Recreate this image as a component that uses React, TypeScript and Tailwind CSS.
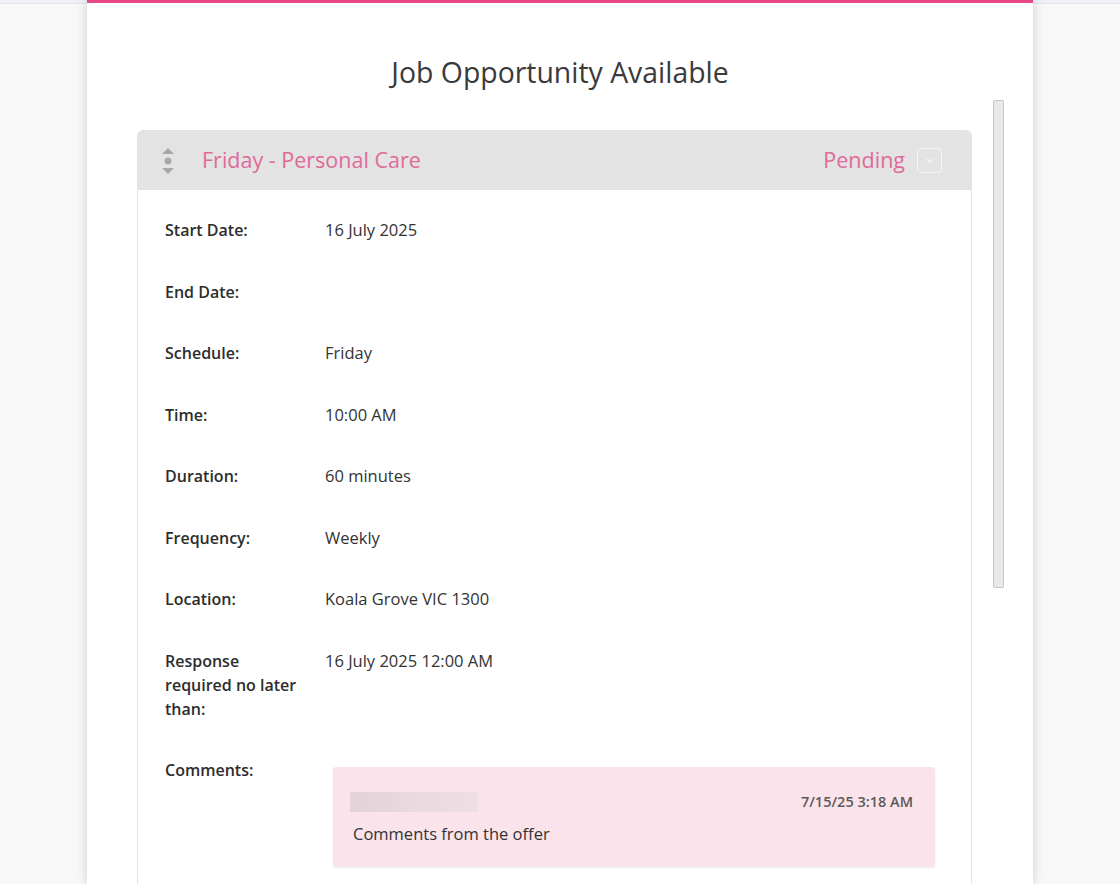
const FONT = { fontFamily: '"Open Sans", "Noto Sans", sans-serif' };

const ROWS: { label: string; value?: string }[] = [
  { label: "Start Date:", value: "16 July 2025" },
  { label: "End Date:" },
  { label: "Schedule:", value: "Friday" },
  { label: "Time:", value: "10:00 AM" },
  { label: "Duration:", value: "60 minutes" },
  { label: "Frequency:", value: "Weekly" },
  { label: "Location:", value: "Koala Grove VIC 1300" },
  { label: "Response required no later than:", value: "16 July 2025 12:00 AM" },
];

function DragHandle() {
  return (
    <svg width="14" height="30" viewBox="0 0 14 30" className="shrink-0">
      <polygon points="7,2 13,8 1,8" fill="#a8a8a8" />
      <circle cx="7" cy="15" r="3.5" fill="#a8a8a8" />
      <polygon points="1,22 13,22 7,28" fill="#a8a8a8" />
    </svg>
  );
}

function SideStrip() {
  return (
    <div className="flex flex-1 flex-col">
      <div className="h-[4px] bg-[#eef0f9] border-b border-[#e4e4e8]" />
      <div className="flex-1 bg-[#f8f8f8]" />
    </div>
  );
}

export default function App() {
  return (
    <div
      className="flex h-[884px] w-[1120px] overflow-hidden bg-[#f8f8f8] text-[#333]"
      style={FONT}
    >
      <div className="flex w-[87px] shrink-0 flex-col">
        <SideStrip />
      </div>

      <div className="relative z-10 flex w-[946px] shrink-0 flex-col border-t-[3px] border-[#e8498b] bg-white shadow-[0_0_10px_rgba(0,0,0,0.18)]">
        <h1 className="mt-[50px] text-center text-[28.4px] leading-[38px] text-[#3a3a3a]">
          Job Opportunity Available
        </h1>

        <div className="mt-[9px] flex flex-1 pl-[50px] pr-[29px]">
          <div className="mt-[30px] flex-1">
            <div className="flex h-[60px] items-center rounded-t-[6px] bg-[#e3e3e3] pl-[24px] pr-[30px] pt-[1px]">
              <DragHandle />
              <span className="ml-[27px] text-[21.5px] text-[#e06a99]">
                Friday - Personal Care
              </span>
              <span className="ml-auto text-[21.5px] text-[#e06a99]">Pending</span>
              <span className="ml-[12px] flex h-[25px] w-[25px] items-center justify-center rounded-[4px] border-[1.5px] border-[#f4f4f4]">
                <svg width="8" height="5" viewBox="0 0 8 5">
                  <path d="M1 1 L4 4 L7 1" fill="none" stroke="#f6f6f6" strokeWidth="1.3" />
                </svg>
              </span>
            </div>

            <div className="h-full border-x border-[#e2e2e2] pl-[27px] pr-[36px] pt-[28px]">
              <div className="flex flex-col gap-[37.5px]">
                {ROWS.map((r) => (
                  <div key={r.label} className="flex leading-[24px]">
                    <div className="w-[160px] shrink-0 pr-[22px] text-[16px] font-semibold text-[#2d2d2d]">
                      {r.label}
                    </div>
                    <div className="text-[16.5px] text-[#333]">{r.value}</div>
                  </div>
                ))}
                <div className="flex leading-[24px]">
                  <div className="w-[160px] shrink-0 pr-[22px] text-[16px] font-semibold text-[#2d2d2d]">
                    Comments:
                  </div>
                  <div className="ml-[8px] mt-[9px] h-[100px] flex-1 rounded-[3px] bg-[#fae3ea] pl-[17px] pr-[22px] pt-[23px] shadow-[0_1px_2px_rgba(0,0,0,0.08)]">
                    <div className="flex items-center justify-between">
                      <div className="h-[20px] w-[128px] bg-gradient-to-r from-[#e2d2d9] via-[#ead9df] to-[#efdfe5]" />
                      <span className="text-[14.5px] font-semibold text-[#5a5a5a]">
                        7/15/25 3:18 AM
                      </span>
                    </div>
                    <p className="ml-[3px] mt-[8px] text-[16.5px] text-[#333]">
                      Comments from the offer
                    </p>
                  </div>
                </div>
              </div>
            </div>
          </div>

          <div className="ml-[21px] h-[488px] w-[11px] shrink-0 rounded-[1px] border border-[#c8c8c8] bg-[#e9e9e9]" />
        </div>
      </div>

      <div className="flex flex-1 flex-col">
        <SideStrip />
      </div>
    </div>
  );
}
